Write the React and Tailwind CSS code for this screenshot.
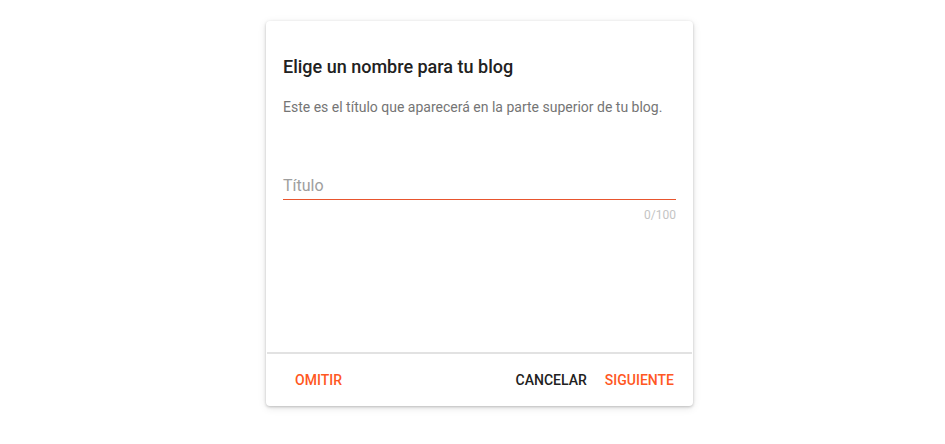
export default function App() {
  return (
    <div className="w-[945px] h-[444px] bg-white flex justify-center pl-[14px]" style={{ fontFamily: "Roboto, 'Noto Sans', sans-serif" }}>
      <div className="mt-[21px] w-[427px] h-[385px] bg-white rounded-[4px] shadow-[0_1px_3px_rgba(0,0,0,0.22),0_2px_8px_rgba(0,0,0,0.10)] flex flex-col">
        <div className="flex-1 flex flex-col px-[17px] pt-[34px]">
          <h1 className="text-[18px] leading-[24px] font-medium text-[#212121]">Elige un nombre para tu blog</h1>
          <p className="mt-[18px] text-[14px] leading-[20px] text-[#757575]">Este es el título que aparecerá en la parte superior de tu blog.</p>
          <div className="mt-[57px] pb-px border-b border-[#e8552e]">
            <div className="text-[16px] leading-[24px] text-[#9e9e9e]">Título</div>
          </div>
          <div className="mt-[7px] text-right text-[12px] leading-[16px] text-[#c4c4c4]">0/100</div>
        </div>
        <div className="mx-px h-[2px] bg-[#e2e2e2]"></div>
        <div className="h-[52px] flex items-center text-[14px] font-medium uppercase">
          <span className="ml-[29px] text-[#ff5722]">Omitir</span>
          <span className="ml-auto text-[#212121]">Cancelar</span>
          <span className="ml-[18px] mr-[19px] text-[#ff5722]">Siguiente</span>
        </div>
      </div>
    </div>
  );
}
